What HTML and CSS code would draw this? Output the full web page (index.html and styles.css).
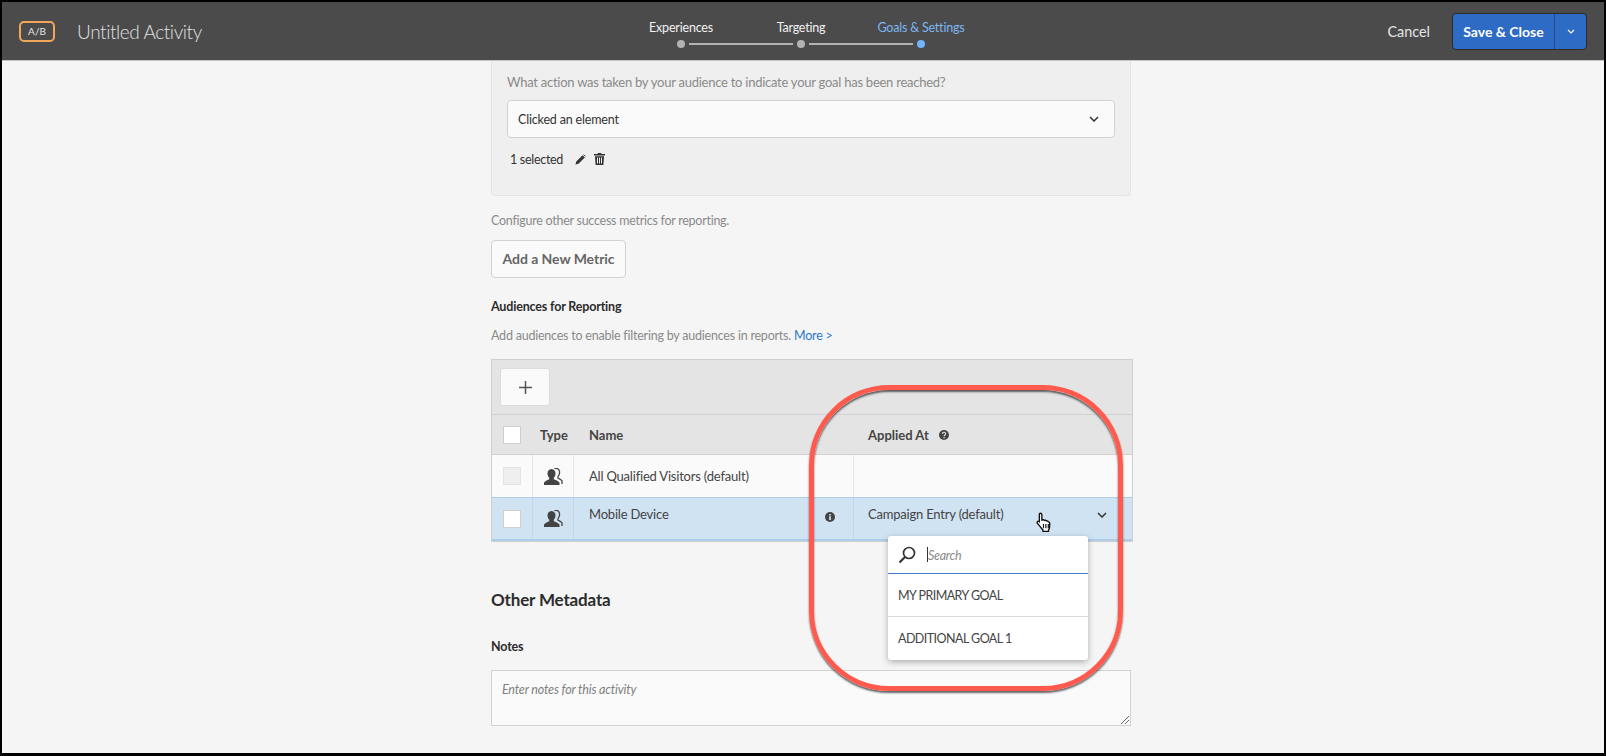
FILE: index.html
```html
<!DOCTYPE html>
<html lang="en">
<head>
<meta charset="utf-8">
<title>Untitled Activity</title>
<link rel="stylesheet" href="styles.css">
</head>
<body>
<div class="frame">
  <header class="topbar">
    <div class="brand">
      <span class="badge">A/B</span>
      <span class="activity">Untitled Activity</span>
    </div>
    <nav class="steps">
      <div class="step-labels">
        <span class="step-label">Experiences</span>
        <span class="step-label">Targeting</span>
        <span class="step-label current">Goals &amp; Settings</span>
      </div>
      <div class="step-track">
        <i class="dot"></i><i class="line"></i><i class="dot"></i><i class="line"></i><i class="dot current"></i>
      </div>
    </nav>
    <div class="actions">
      <span class="cancel">Cancel</span>
      <div class="save">
        <span class="save-main">Save &amp; Close</span>
        <span class="save-more"><svg width="8" height="5" viewBox="0 0 8 5"><path d="M1 1l3 3 3-3" fill="none" stroke="#fff" stroke-width="1.2"/></svg></span>
      </div>
    </div>
  </header>
  <main class="content">
    <section class="goal-panel">
      <p class="muted panel-q">What action was taken by your audience to indicate your goal has been reached?</p>
      <div class="select">
        <span>Clicked an element</span>
        <svg width="10" height="6" viewBox="0 0 10 6"><path d="M1 1l4 4 4-4" fill="none" stroke="#333" stroke-width="1.5"/></svg>
      </div>
      <div class="selected-row">
        <span>1 selected</span>
        <svg class="ic-pencil" width="11" height="11" viewBox="0 0 11 11"><path d="M0.5 10.5l.8-3L7.6 1.2l2.2 2.2-6.3 6.3z" fill="#333"/><path d="M8.2 .6l.6-.4 2 2-.4.6z" fill="#333"/></svg>
        <svg width="11" height="12" viewBox="0 0 11 12"><path d="M4 0h3l.5 1H11v1.4H0V1h3.500zM1 3.200h9L9.400 12H1.600zM3 4.500v6h1v-6zM5 4.500v6h1v-6zM7 4.500v6h1v-6z" fill="#333" fill-rule="evenodd"/></svg>
      </div>
    </section>
    <p class="muted config">Configure other success metrics for reporting.</p>
    <button class="add-metric">Add a New Metric</button>
    <h3 class="label aud-title">Audiences for Reporting</h3>
    <p class="muted aud-desc">Add audiences to enable filtering by audiences in reports. <a class="more">More &gt;</a></p>
    <section class="table">
      <div class="toolbar"><span class="plus"><svg width="13" height="13" viewBox="0 0 13 13"><path d="M6.500 0v13M0 6.500h13" stroke="#555" stroke-width="1.500"/></svg></span></div>
      <div class="row head">
        <div class="cell c-check"><span class="check"></span></div>
        <div class="cell c-type">Type</div>
        <div class="cell c-name">Name</div>
        <div class="cell c-applied">Applied At
          <svg class="help" width="10" height="10" viewBox="0 0 10 10"><circle cx="5" cy="5" r="5" fill="#444"/><path d="M3.400 3.900c0-2.100 3.300-2.100 3.300-.1 0 1.200-1.600 1.200-1.600 2.400" fill="none" stroke="#e4e4e4" stroke-width="1.100"/><circle cx="5.100" cy="7.700" r=".75" fill="#e4e4e4"/></svg>
        </div>
      </div>
      <div class="row plain">
        <div class="cell c-check"><span class="check off"></span></div>
        <div class="cell c-type"><svg class="people" width="19" height="17" viewBox="0 0 19 17"><use href="#people"/></svg></div>
        <div class="cell c-name body-text">All Qualified Visitors (default)</div>
        <div class="cell c-applied"></div>
      </div>
      <div class="row picked">
        <div class="cell c-check"><span class="check"></span></div>
        <div class="cell c-type"><svg class="people" width="19" height="17" viewBox="0 0 19 17"><use href="#people"/></svg></div>
        <div class="cell c-name body-text"><span class="raised">Mobile Device</span>
          <svg class="info" width="10" height="10" viewBox="0 0 10 10"><circle cx="5" cy="5" r="5" fill="#444"/><rect x="4.200" y="4.200" width="1.700" height="3.800" fill="#d0e3f3"/><rect x="4.200" y="2" width="1.700" height="1.500" fill="#d0e3f3"/></svg>
        </div>
        <div class="cell c-applied split body-text"><span class="raised">Campaign Entry (default)</span>
          <svg class="chev" width="10" height="6" viewBox="0 0 10 6"><path d="M1 1l4 4 4-4" fill="none" stroke="#333" stroke-width="1.500"/></svg>
        </div>
      </div>
    </section>
    <h2 class="meta-title">Other Metadata</h2>
    <h3 class="label notes-label">Notes</h3>
    <div class="notes">
      <span class="placeholder">Enter notes for this activity</span>
      <svg class="grip" width="9" height="9" viewBox="0 0 9 9"><path d="M1 9l8-8M5 9l4-4" stroke="#666" stroke-width="1"/></svg>
    </div>
  </main>

  <div class="popup">
    <div class="search">
      <svg width="18" height="18" viewBox="0 0 18 18"><circle cx="11" cy="7" r="5.500" fill="none" stroke="#333" stroke-width="1.700"/><path d="M7 11l-5.500 5.500" stroke="#333" stroke-width="2.200"/></svg>
      <i class="caret"></i><span class="search-ph">Search</span>
    </div>
    <div class="option">MY PRIMARY GOAL</div>
    <div class="option">ADDITIONAL GOAL 1</div>
  </div>
  <div class="callout"></div>
  <svg class="pointer" width="17" height="21" viewBox="0 0 16 20"><path d="M4 1.200c1 0 1.500.6 1.500 1.500v5l1-.3c.7-.1 1.200.2 1.500.6.800-.3 1.500 0 1.800.5.900-.2 1.600.2 1.800.8l.3.100c.8.200 1.100.8 1.100 1.600l-.2 3.500c0 1.200-.5 2-1 2.800v1.200H6.500v-1.300c-.7-.8-2.200-2.700-3-3.800L1.400 11c-.6-.7-.5-1.500 0-2 .6-.5 1.300-.3 1.700.1V2.700c0-.9 0-1.500.9-1.500z" fill="#fff" stroke="#111" stroke-width="1.300"/><path d="M7 11.500v4M9.300 11.500v4M11.600 11.500v4" stroke="#111" stroke-width="1.100"/></svg>
</div>
<svg class="defs" width="0" height="0"><defs><g id="people"><path d="M10.500.8c.5-.4 1.300-.6 2-.4 2.500.3 3.300 2.500 3 4.800-.2 1.500-.9 2.800-1.500 3.500v1.500c1.500.8 3 1.300 4 2.600V16" fill="none" stroke="#444" stroke-width="1.300"/><path d="M7.500 1c2.800 0 4 2.200 4 4.500 0 1.800-.8 3.300-1.700 4.200v1.500c1.500.8 4.700 1.600 5.700 3.300V17H0v-2.500c1-1.700 4-2.500 5.200-3.300V9.700C4.300 8.800 3.500 7.300 3.500 5.500 3.500 3.200 4.700 1 7.500 1z" fill="#444"/></g></defs></svg>
</body>
</html>
```
FILE: styles.css
```css
* { box-sizing: border-box; }
html, body { margin: 0; padding: 0; }
body { font-family: "Lato", "Open Sans", sans-serif; color: #444; background: #000; }
p, h2, h3 { margin: 0; }
.defs { position: absolute; }
.frame {
  position: relative; width: 1606px; height: 756px; overflow: hidden;
  border: solid #000; border-width: 2px 2px 3px 2px; background: #f5f5f5;
  display: flex; flex-direction: column;
}
.topbar {
  height: 59px; flex: none; background: #4b4b4b; display: grid;
  grid-template-columns: 1fr auto 1fr; align-items: center; padding: 0 17px 0 17px;
  border-bottom: 1px solid #c4c4c4;
}
.brand { display: flex; align-items: center; }
.badge {
  width: 36px; height: 21px; border: 2px solid #f2a65a; border-radius: 5px; color: #e4e4e4;
  font-size: 10px; display: flex; align-items: center; justify-content: center;
}
.activity { margin-left: 22px; color: #e0e0e0; font-size: 19px; font-weight: 300; letter-spacing: -.42px; }
.steps { display: flex; flex-direction: column; align-items: center; transform: translate(-2px, 3px); }
.step-labels { display: flex; font-size: 12.500px; color: #f2f2f2; letter-spacing: -.2px; }
.step-label { width: 120px; text-align: center; white-space: nowrap; }
.step-label.current { color: #7db6f2; }
.step-track { display: flex; align-items: center; margin-top: 5px; }
.dot { width: 8px; height: 8px; border-radius: 50%; background: #b3b3b3; }
.dot.current { background: #74b4fa; }
.line { width: 104px; height: 2px; background: #b3b3b3; margin: 0 4px; }
.actions { display: flex; justify-content: flex-end; align-items: center; }
.cancel { color: #e6e6e6; font-size: 14.400px; margin-right: 22px; }
.save { display: flex; height: 37px; border: 1px solid #2b2b2b; border-radius: 4px; overflow: hidden; background: #2d6bc4; color: #fff; }
.save-main { width: 101px; font-size: 14px; font-weight: 700; display: flex; align-items: center; justify-content: center; }
.save-more { width: 32px; border-left: 1px solid #1e4a8e; display: flex; align-items: center; justify-content: center; }
.content { padding-left: 489px; width: 1131px; font-size: 12.500px; letter-spacing: -.22px; }
.muted { color: #8a8a8a; }
.goal-panel {
  width: 640px; height: 135px; background: #efefef; border: 1px solid #e4e4e4; border-top: 0;
  border-radius: 0 0 4px 4px; padding: 12px 15px 0 15px;
}
.panel-q { line-height: 18px; font-size: 13px; letter-spacing: -.25px; }
.select {
  margin-top: 9px; height: 38px; border: 1px solid #d2d2d2; border-radius: 4px; background: #fafafa;
  display: flex; align-items: center; justify-content: space-between; padding: 0 15px 0 10px; color: #333;
  letter-spacing: -.17px;
}
.selected-row { display: flex; align-items: center; margin: 12px 0 0 3px; height: 18px; color: #333; letter-spacing: -.3px; }
.ic-pencil { margin: 0 8px 0 12px; }
.config { margin-top: 16px; line-height: 18px; letter-spacing: -.26px; }
.add-metric {
  display: block; margin-top: 10px; width: 135px; height: 38px; background: #fafafa; border: 1px solid #d2d2d2;
  border-radius: 4px; font: 700 14px "Lato", sans-serif; color: #666; padding: 0 0 2px; letter-spacing: -.05px;
}
.label { font-size: 12.500px; font-weight: 700; color: #2c2c2c; letter-spacing: -.17px; }
.aud-title { margin-top: 20px; line-height: 18px; }
.aud-desc { margin-top: 11px; line-height: 18px; }
.more { color: #2a79c9; }
.table { margin-top: 14px; width: 642px; border: 1px solid #cfcfcf; background: #e4e4e4; letter-spacing: 0; font-size: 13px; }
.toolbar { height: 55px; padding: 8px 0 0 8px; border-bottom: 1px solid #d2d2d2; }
.plus {
  width: 50px; height: 38px; background: #fafafa; border: 1px solid #dcdcdc; border-radius: 3px;
  display: flex; align-items: center; justify-content: center;
}
.row { display: grid; grid-template-columns: 41px 41px 280px 278px; }
.cell { display: flex; align-items: center; }
.head { height: 40px; border-bottom: 1px solid #d2d2d2; font-weight: 700; color: #444; }
.plain { height: 43px; background: #fafafa; border-bottom: 1px solid #aecde8; }
.picked { height: 43px; background: #d0e3f3; border-bottom: 2px solid #aecde8; }
.plain .cell, .picked .cell { border-right: 1px solid #e6e6e6; }
.picked .cell { border-right-color: #c3d8ea; }
.row .cell:last-child { border-right: 0; }
.c-check { padding-left: 11px; }
.c-type { padding-left: 7px; }
.plain .c-type, .picked .c-type { padding-left: 11px; }
.c-name { padding-left: 15px; justify-content: space-between; padding-right: 18px; }
.c-applied { padding-left: 14px; }
.body-text { letter-spacing: -.2px; }
.raised { transform: translateY(-5px); }
.split { justify-content: space-between; padding-right: 25px; }
.chev { transform: translateY(-4px); }
.info { transform: translateY(-2px); }
.help { margin-left: 10px; }
.check { width: 18px; height: 18px; background: #fff; border: 1px solid #cfcfcf; }
.check.off { background: #efefef; border-color: #e4e4e4; }
.meta-title { margin-top: 46px; font-size: 17px; font-weight: 700; color: #2c2c2c; line-height: 24px; letter-spacing: -.15px; }
.notes-label { margin-top: 26px; line-height: 18px; }
.notes {
  position: relative; margin-top: 14px; width: 640px; height: 56px; background: #fafafa; border: 1px solid #d2d2d2;
  padding: 11px 10px;
}
.placeholder { font-style: italic; color: #808080; font-size: 12.500px; letter-spacing: -.17px; }
.grip { position: absolute; right: 1px; bottom: 1px; }
.popup {
  position: absolute; left: 886px; top: 534px; width: 200px; height: 124px; background: #fff;
  border-radius: 3px; box-shadow: 0 2px 6px rgba(0,0,0,.3); font-size: 12.500px; color: #444; letter-spacing: -.55px;
}
.search {
  height: 38px; border-bottom: 1px solid #3f7dc8; display: flex; align-items: center; padding-left: 10px;
}
.caret { width: 1px; height: 15px; background: #333; margin-left: 11px; }
.search-ph { font-style: italic; color: #8a8a8a; font-size: 12.500px; letter-spacing: -.3px; padding-top: 1px; }
.option { height: 43px; display: flex; align-items: center; padding-left: 10px; border-bottom: 1px solid #d8d8d8; }
.option:last-child { border-bottom: 0; }
.callout {
  position: absolute; left: 807px; top: 383px; width: 314px; height: 306px; border: 5px solid #ff5a4d;
  border-radius: 80px; box-shadow: 0 2px 2px rgba(0,0,0,.6), inset 0 2px 2px rgba(0,0,0,.6);
}
.pointer { position: absolute; left: 1034px; top: 510px; }
```
